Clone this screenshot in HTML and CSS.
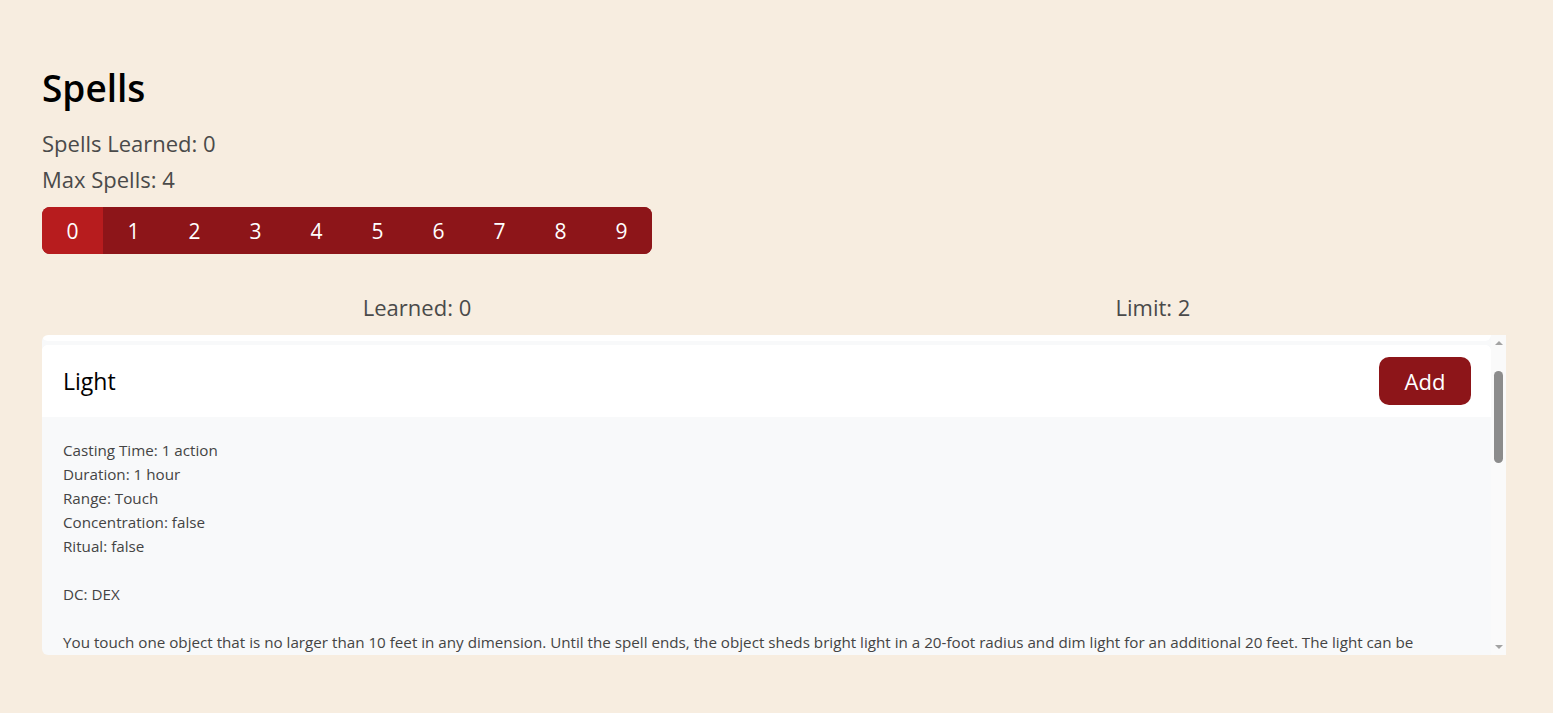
FILE: index.html
```html
<!DOCTYPE html>
<html lang="en">
<head>
<meta charset="utf-8">
<title>Spells</title>
<link rel="stylesheet" href="styles.css">
</head>
<body>
<main class="page">
  <h1 class="title">Spells</h1>
  <p class="stat first">Spells Learned: 0</p>
  <p class="stat">Max Spells: 4</p>
  <nav class="levels">
    <button class="level active">0</button>
    <button class="level">1</button>
    <button class="level">2</button>
    <button class="level">3</button>
    <button class="level">4</button>
    <button class="level">5</button>
    <button class="level">6</button>
    <button class="level">7</button>
    <button class="level">8</button>
    <button class="level">9</button>
  </nav>
  <div class="counts">
    <div class="count learned">Learned: 0</div>
    <div class="count limit">Limit: 2</div>
  </div>
  <div class="list-wrap">
    <section class="list" id="spell-list">
      <div class="card card-prev"></div>
      <article class="card">
        <header class="card-head">
          <span class="card-name">Light</span>
          <button class="add">Add</button>
        </header>
        <div class="card-body">
          <p class="line">Casting Time: 1 action</p>
          <p class="line">Duration: 1 hour</p>
          <p class="line">Range: Touch</p>
          <p class="line">Concentration: false</p>
          <p class="line">Ritual: false</p>
          <p class="line blank"></p>
          <p class="line">DC: DEX</p>
          <p class="line blank"></p>
          <p class="line">You touch one object that is no larger than 10 feet in any dimension. Until the spell ends, the object sheds bright light in a 20-foot radius and dim light for an additional 20 feet. The light can be colored as you like. Completely covering the object with something opaque blocks the light. The spell ends if you cast it again or dismiss it as an action.</p>
          <p class="line">If you target an object held or worn by a hostile creature, that creature must succeed on a Dexterity saving throw to avoid the spell.</p>
        </div>
      </article>
    </section>
    <div class="scrollbar" aria-hidden="true">
      <div class="sb-btn"><span class="arrow up"></span></div>
      <div class="sb-track"><div class="sb-thumb"></div></div>
      <div class="sb-btn"><span class="arrow down"></span></div>
    </div>
  </div>
</main>
<script src="script.js"></script>
</body>
</html>
```

FILE: styles.css
```css
* { box-sizing: border-box; }
html, body {
  margin: 0;
  padding: 0;
  background: #f7ede0;
  font-family: "Open Sans", "Noto Sans", sans-serif;
}
.page {
  padding: 60px 47px 40px 42px;
}
.title {
  margin: 0 0 9px 0;
  font-size: 37px;
  font-weight: 600;
  line-height: 56px;
  color: #000;
}
.stat {
  margin: 0;
  font-size: 22px;
  line-height: 36px;
  color: #4a4a4a;
}
.levels {
  display: flex;
  width: 610px;
  margin-top: 10px;
  border-radius: 8px;
  overflow: hidden;
  background: #8d1519;
}
.level {
  flex: 1;
  height: 47px;
  border: 0;
  padding: 0;
  background: #8d1519;
  color: #fff;
  font-family: inherit;
  font-size: 21px;
}
.level.active { background: #b71c1e; }
.counts {
  display: flex;
  margin-top: 39px;
}
.count {
  flex: 1;
  text-align: center;
  font-size: 22px;
  line-height: 28px;
  color: #4a4a4a;
}
.count.learned { padding-left: 22px; }
.count.limit { padding-left: 30px; }
.list-wrap {
  display: flex;
  margin-top: 14px;
  height: 320px;
  border-radius: 6px 0 0 6px;
  overflow: hidden;
}
.list {
  flex: 1;
  overflow-y: scroll;
  scrollbar-width: none;
  background: #f8f9fa;
}
.list::-webkit-scrollbar { display: none; }
.scrollbar {
  width: 15px;
  display: flex;
  flex-direction: column;
  background: #fafafa;
}
.sb-btn {
  height: 16px;
  display: flex;
  align-items: center;
  justify-content: center;
}
.arrow {
  width: 0;
  height: 0;
  border-left: 4px solid transparent;
  border-right: 4px solid transparent;
}
.arrow.up { border-bottom: 4px solid #a3a3a3; }
.arrow.down { border-top: 4px solid #a3a3a3; }
.sb-track {
  flex: 1;
  padding: 20px 3px 0 3px;
}
.sb-thumb {
  height: 92px;
  border-radius: 5px;
  background: #8c8c8c;
}
.card {
  background: #fff;
  border-radius: 6px;
}
.card-prev {
  height: 72px;
  margin-bottom: 4px;
}
.card-head {
  display: flex;
  align-items: center;
  justify-content: space-between;
  height: 72px;
  padding: 0 20px 0 21px;
  background: #fff;
  border-radius: 6px 6px 0 0;
}
.card-name {
  font-size: 23px;
  color: #000;
}
.add {
  width: 92px;
  height: 48px;
  border: 0;
  border-radius: 10px;
  background: #8d1519;
  color: #fff;
  font-family: inherit;
  font-size: 22px;
}
.card-body {
  min-height: 850px;
  padding: 21px 40px 16px 21px;
  background: #f8f9fa;
  font-size: 15.2px;
  line-height: 24px;
  color: #444;
}
.line { margin: 0; min-height: 24px; }
```

FILE: script.js
```js
document.getElementById('spell-list').scrollTop = 66;
```
